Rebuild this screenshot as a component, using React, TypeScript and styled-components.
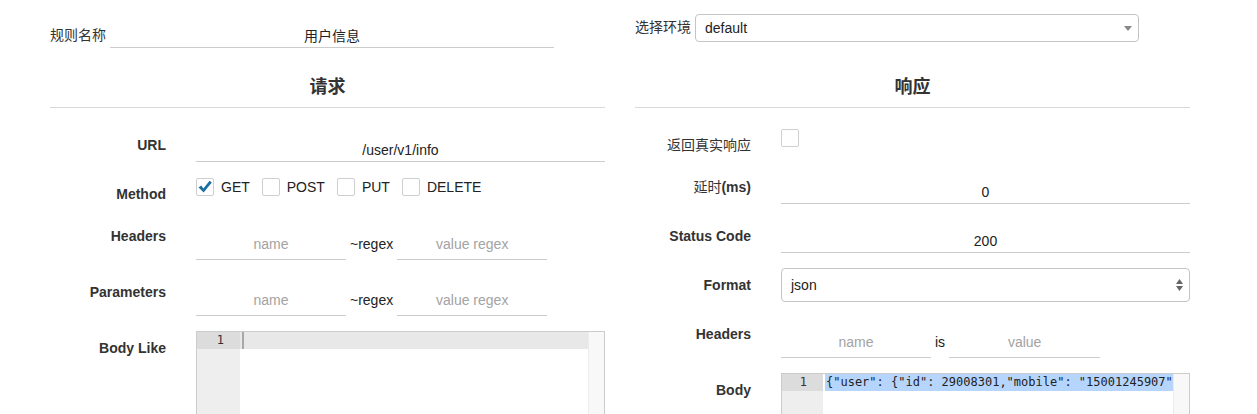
import React from "react";
import styled, { createGlobalStyle } from "styled-components";

const Global = createGlobalStyle`
  html, body { margin: 0; padding: 0; background: #fff; }
  body {
    font-family: "Liberation Sans", "Noto Sans CJK SC", sans-serif;
    font-size: 14px;
    color: #333;
    overflow: hidden;
  }
  * { box-sizing: border-box; }
`;

const Page = styled.div`
  display: grid;
  grid-template-columns: 555px 555px;
  column-gap: 30px;
  padding: 13px 50px 0;
`;

const Column = styled.section`
  display: flex;
  flex-direction: column;
`;

const TopField = styled.div`
  display: flex;
  align-items: flex-start;
  gap: 4px;
  height: 35px;
`;

const TopLabel = styled.span<{ $offset: number }>`
  line-height: 20px;
  padding-top: ${(p) => p.$offset}px;
  white-space: nowrap;
`;

const UnderlineInput = styled.input<{ $h: number; $pt: number; $w?: number }>`
  display: block;
  width: ${(p) => (p.$w ? `${p.$w}px` : "100%")};
  flex: ${(p) => (p.$w ? "none" : "1")};
  height: ${(p) => p.$h}px;
  padding: ${(p) => p.$pt}px 0 ${(p) => p.$h - p.$pt - 21}px;
  line-height: 20px;
  border: none;
  border-bottom: 1px solid #ccc;
  border-radius: 0;
  background: transparent;
  outline: none;
  font: inherit;
  font-size: 14px;
  color: #222;
  text-align: center;
  &::placeholder { color: #a3a3a3; }
`;

const SelectBox = styled.div<{ $h: number; $w?: number; $mt?: number }>`
  display: flex;
  align-items: center;
  justify-content: space-between;
  width: ${(p) => (p.$w ? `${p.$w}px` : "100%")};
  height: ${(p) => p.$h}px;
  margin-top: ${(p) => p.$mt ?? 0}px;
  padding: 0 6px 0 9px;
  border: 1px solid #c4c4c4;
  border-radius: 4px;
  background: #fff;
  color: #222;
  font-size: 14px;
`;

const SectionTitle = styled.h2`
  margin: 19px 0 0;
  font-size: 18px;
  font-weight: bold;
  line-height: 40px;
  text-align: center;
  color: #333;
  border-bottom: 1px solid #d8d8d8;
`;

const Form = styled.div`
  display: flex;
  flex-direction: column;
  gap: 15px;
  margin-top: 20px;
`;

const Row = styled.div`
  display: grid;
  grid-template-columns: 116px 1fr;
  column-gap: 30px;
  align-items: start;
`;

const FieldLabel = styled.label`
  display: block;
  text-align: right;
  font-weight: bold;
  line-height: 20px;
  padding-top: 7px;
  white-space: nowrap;
  color: #333;
`;

const Han = styled.span`
  font-weight: 400;
`;

const CheckGroup = styled.div`
  display: flex;
  align-items: flex-start;
  gap: 12px;
  height: 27px;
  padding-top: 1px;
`;

const CheckItem = styled.span`
  display: flex;
  align-items: center;
  gap: 7px;
  line-height: 18px;
  color: #222;
`;

const Box = styled.span`
  display: inline-flex;
  align-items: center;
  justify-content: center;
  width: 18px;
  height: 18px;
  border: 1px solid #cfcfcf;
  border-radius: 2px;
  background: #fff;
  flex: none;
`;

const Pair = styled.div`
  display: flex;
  align-items: flex-start;
  gap: 4px;
`;

const Joiner = styled.span`
  line-height: 20px;
  padding-top: 15px;
  color: #222;
`;

const Editor = styled.div`
  display: flex;
  height: 240px;
  border: 1px solid #ccc;
  overflow: hidden;
  font-family: "DejaVu Sans Mono", "Liberation Mono", monospace;
  font-size: 12px;
  color: #222;
`;

const Gutter = styled.div<{ $w: number }>`
  width: ${(p) => p.$w}px;
  flex: none;
  background: #eeeeee;
`;

const LineNo = styled.div`
  height: 17px;
  line-height: 17px;
  text-align: right;
  padding-right: 16px;
  background: #dcdcdc;
  color: #333;
`;

const Lines = styled.div`
  flex: 1;
  min-width: 0;
  overflow: hidden;
`;

const CodeLine = styled.div<{ $active?: boolean }>`
  display: flex;
  align-items: stretch;
  height: 17px;
  line-height: 17px;
  padding-left: 2px;
  white-space: pre;
  background: ${(p) => (p.$active ? "#e8e8e8" : "transparent")};
`;

const Caret = styled.span`
  width: 2px;
  background: #a8a8a8;
`;

const Selected = styled.span`
  flex: 1;
  padding-left: 1px;
  background: #b5d5fd;
`;

const Scrollbar = styled.div`
  width: 16px;
  flex: none;
  background: #f8f8f8;
  border-left: 1px solid #ececec;
`;

const CheckMark = () => (
  <svg width="16" height="16" viewBox="0 0 16 16">
    <path d="M1.6 8.4 L4.2 6.4 L6.4 9.4 L12.6 1.8 L14.8 3.6 L6.6 13.6 Z" fill="#1a6ea3" />
  </svg>
);

const Checkbox = ({ checked }: { checked?: boolean }) => <Box>{checked && <CheckMark />}</Box>;

const DownArrow = () => (
  <svg width="8" height="5" viewBox="0 0 8 5">
    <path d="M0 0 H8 L4 5 Z" fill="#888" />
  </svg>
);

const UpDownArrow = () => (
  <svg width="7" height="12" viewBox="0 0 7 12">
    <path d="M0 5 L3.5 0 L7 5 Z" fill="#666" />
    <path d="M0 7 L3.5 12 L7 7 Z" fill="#666" />
  </svg>
);

export default function App() {
  return (
    <>
      <Global />
      <Page>
        <Column>
          <TopField>
            <TopLabel $offset={12}>规则名称</TopLabel>
            <UnderlineInput $h={35} $pt={12} $w={444} defaultValue="用户信息" />
          </TopField>
          <SectionTitle>请求</SectionTitle>
          <Form>
            <Row>
              <FieldLabel>URL</FieldLabel>
              <UnderlineInput $h={34} $pt={12} defaultValue="/user/v1/info" />
            </Row>
            <Row>
              <FieldLabel>Method</FieldLabel>
              <CheckGroup>
                <CheckItem><Checkbox checked />GET</CheckItem>
                <CheckItem><Checkbox />POST</CheckItem>
                <CheckItem><Checkbox />PUT</CheckItem>
                <CheckItem><Checkbox />DELETE</CheckItem>
              </CheckGroup>
            </Row>
            <Row>
              <FieldLabel>Headers</FieldLabel>
              <Pair>
                <UnderlineInput $h={41} $pt={15} $w={150} placeholder="name" />
                <Joiner>~regex</Joiner>
                <UnderlineInput $h={41} $pt={15} $w={150} placeholder="value regex" />
              </Pair>
            </Row>
            <Row>
              <FieldLabel>Parameters</FieldLabel>
              <Pair>
                <UnderlineInput $h={41} $pt={15} $w={150} placeholder="name" />
                <Joiner>~regex</Joiner>
                <UnderlineInput $h={41} $pt={15} $w={150} placeholder="value regex" />
              </Pair>
            </Row>
            <Row>
              <FieldLabel>Body Like</FieldLabel>
              <Editor>
                <Gutter $w={43}>
                  <LineNo>1</LineNo>
                </Gutter>
                <Lines>
                  <CodeLine $active>
                    <Caret />
                  </CodeLine>
                </Lines>
                <Scrollbar />
              </Editor>
            </Row>
          </Form>
        </Column>

        <Column>
          <TopField>
            <TopLabel $offset={4}>选择环境</TopLabel>
            <SelectBox $h={28} $w={444} $mt={1}>
              <span>default</span>
              <DownArrow />
            </SelectBox>
          </TopField>
          <SectionTitle>响应</SectionTitle>
          <Form>
            <Row>
              <FieldLabel><Han>返回真实响应</Han></FieldLabel>
              <CheckGroup>
                <Checkbox />
              </CheckGroup>
            </Row>
            <Row>
              <FieldLabel><Han>延时</Han>(ms)</FieldLabel>
              <UnderlineInput $h={34} $pt={12} defaultValue="0" />
            </Row>
            <Row>
              <FieldLabel>Status Code</FieldLabel>
              <UnderlineInput $h={34} $pt={12} defaultValue="200" />
            </Row>
            <Row>
              <FieldLabel>Format</FieldLabel>
              <SelectBox $h={34}>
                <span>json</span>
                <UpDownArrow />
              </SelectBox>
            </Row>
            <Row>
              <FieldLabel>Headers</FieldLabel>
              <Pair>
                <UnderlineInput $h={41} $pt={15} $w={150} placeholder="name" />
                <Joiner>is</Joiner>
                <UnderlineInput $h={41} $pt={15} $w={151} placeholder="value" />
              </Pair>
            </Row>
            <Row>
              <FieldLabel>Body</FieldLabel>
              <Editor>
                <Gutter $w={41}>
                  <LineNo>1</LineNo>
                </Gutter>
                <Lines>
                  <CodeLine>
                    <Selected>{'{"user": {"id": 29008301,"mobile": "15001245907"'}</Selected>
                  </CodeLine>
                </Lines>
                <Scrollbar />
              </Editor>
            </Row>
          </Form>
        </Column>
      </Page>
    </>
  );
}
